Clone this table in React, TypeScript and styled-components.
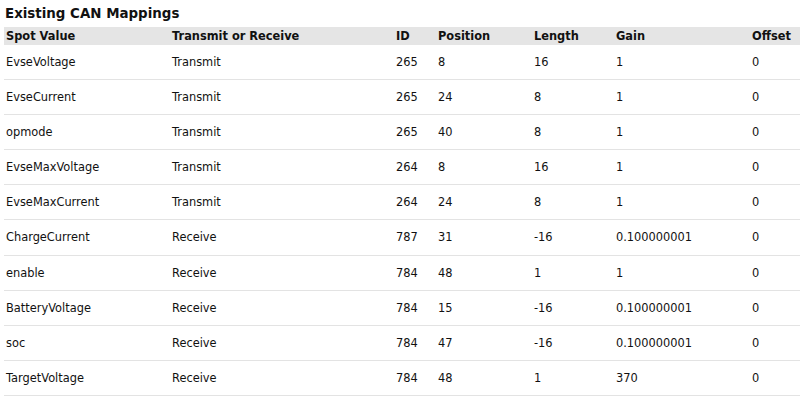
import React from "react";
import styled, { createGlobalStyle } from "styled-components";

const Global = createGlobalStyle`
  html, body { margin: 0; padding: 0; background: #fff; }
  body { font-family: "DejaVu Sans", sans-serif; color: #111; overflow: hidden; }
`;

const Page = styled.div`
  padding: 5px 0 0 4px;
`;

const Title = styled.h3`
  margin: 0 0 5px 1px;
  font-size: 13.4px;
  font-weight: bold;
  line-height: 17px;
`;

const Table = styled.table`
  width: 796px;
  border-collapse: collapse;
  font-size: 11.4px;
`;

const HeadCell = styled.th`
  background: #e5e5e5;
  text-align: left;
  font-weight: bold;
  padding: 2px 2px 1px;
  line-height: 15px;
`;

const Cell = styled.td`
  padding: 10px 2px;
  line-height: 14.1px;
  border-bottom: 1px solid #e3e3e3;
`;

const cols = [166, 224, 42, 96, 82, 136, 50];
const headers = ["Spot Value", "Transmit or Receive", "ID", "Position", "Length", "Gain", "Offset"];
const rows: string[][] = [
  ["EvseVoltage", "Transmit", "265", "8", "16", "1", "0"],
  ["EvseCurrent", "Transmit", "265", "24", "8", "1", "0"],
  ["opmode", "Transmit", "265", "40", "8", "1", "0"],
  ["EvseMaxVoltage", "Transmit", "264", "8", "16", "1", "0"],
  ["EvseMaxCurrent", "Transmit", "264", "24", "8", "1", "0"],
  ["ChargeCurrent", "Receive", "787", "31", "-16", "0.100000001", "0"],
  ["enable", "Receive", "784", "48", "1", "1", "0"],
  ["BatteryVoltage", "Receive", "784", "15", "-16", "0.100000001", "0"],
  ["soc", "Receive", "784", "47", "-16", "0.100000001", "0"],
  ["TargetVoltage", "Receive", "784", "48", "1", "370", "0"],
];

export default function App() {
  return (
    <>
      <Global />
      <Page>
        <Title>Existing CAN Mappings</Title>
        <Table>
          <colgroup>
            {cols.map((w, i) => (
              <col key={i} style={{ width: w }} />
            ))}
          </colgroup>
          <thead>
            <tr>
              {headers.map((h) => (
                <HeadCell key={h}>{h}</HeadCell>
              ))}
            </tr>
          </thead>
          <tbody>
            {rows.map((r, i) => (
              <tr key={i}>
                {r.map((c, j) => (
                  <Cell key={j}>{c}</Cell>
                ))}
              </tr>
            ))}
          </tbody>
        </Table>
      </Page>
    </>
  );
}
